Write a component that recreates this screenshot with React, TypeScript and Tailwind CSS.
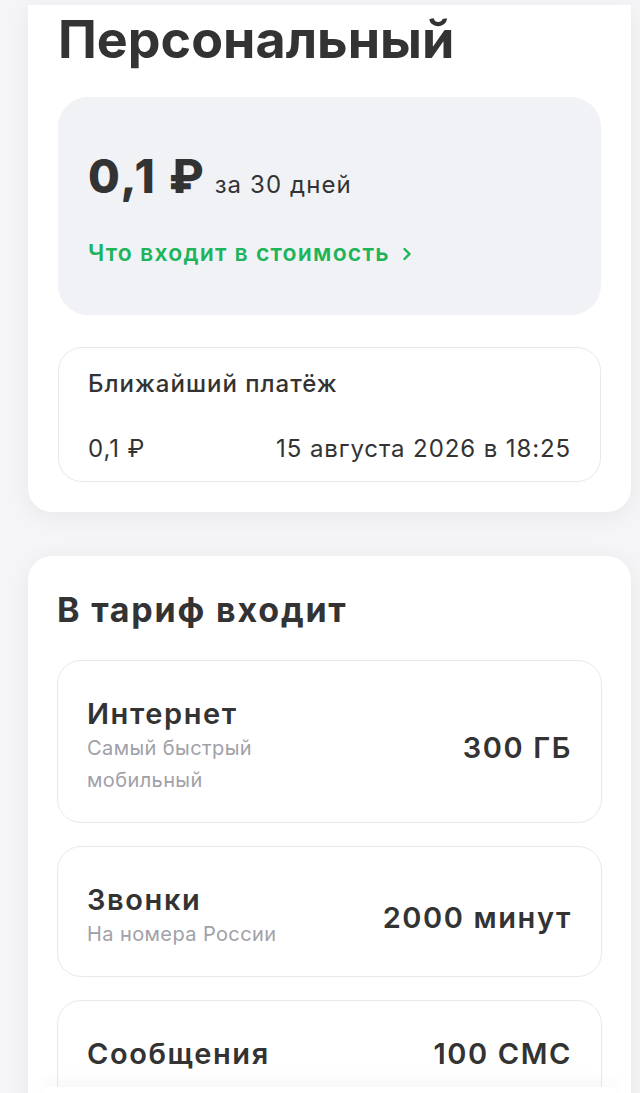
import React from "react";

function Chevron() {
  return (
    <svg width="10" height="14" viewBox="0 0 10 14" fill="none" className="ml-[12px]">
      <path d="M2.5 2 L7.5 7 L2.5 12" stroke="#1db45a" strokeWidth="2.4" strokeLinecap="round" strokeLinejoin="round" />
    </svg>
  );
}

function Item({ title, sub, value, pad = "pt-[38px] pb-[26px]" }: { title: string; sub?: string[]; value: string; pad?: string }) {
  return (
    <div className={`flex items-center justify-between rounded-[24px] border border-[#e9e9ec] bg-white pl-[29px] pr-[29px] ${pad}`}>
      <div className="flex flex-col">
        <div className="text-[29px] leading-[29px] font-semibold tracking-[1.6px] text-[#333333]">{title}</div>
        {sub && (
          <div className="mt-[4px] text-[20px] leading-[32px] tracking-[0.4px] text-[#a0a1a8]">
            {sub.map((s) => (
              <div key={s}>{s}</div>
            ))}
          </div>
        )}
      </div>
      <div className="text-[29px] leading-[29px] font-semibold tracking-[1.6px] text-[#333333] whitespace-nowrap">{value}</div>
    </div>
  );
}

export default function App() {
  return (
    <div
      className="relative h-[1093px] overflow-hidden bg-[#f5f5f7] pl-[28px] pr-[9px] pt-[5px]"
      style={{ fontFamily: "Inter, 'Noto Sans', sans-serif" }}
    >
      <div className="rounded-b-[24px] bg-white px-[30px] pt-[9px] pb-[30px] shadow-[0_4px_24px_rgba(0,0,0,0.06)]">
        <h1 className="text-[52px] leading-[52px] font-bold tracking-[0px] text-[#333333]">Персональный</h1>
        <div className="mt-[31px] rounded-[30px] bg-[#f1f2f6] pl-[30px] pt-[56px] pb-[50px]">
          <div className="flex items-baseline gap-[9px]">
            <span className="text-[46px] leading-[46px] font-extrabold tracking-[2px] text-[#333333]">0,1 ₽</span>
            <span className="text-[24px] leading-[24px] tracking-[1.1px] text-[#333333]">за 30 дней</span>
          </div>
          <div className="mt-[43px] flex items-center text-[23px] leading-[23px] font-semibold tracking-[1.2px] text-[#1db45a]">
            Что входит в стоимость
            <Chevron />
          </div>
        </div>
        <div className="mt-[32px] rounded-[24px] border border-[#e9e9ec] bg-white pl-[29px] pr-[29px] pt-[24px] pb-[20px]">
          <div className="text-[24px] leading-[24px] font-medium tracking-[1px] text-[#333333]">Ближайший платёж</div>
          <div className="mt-[41px] flex items-baseline justify-between text-[24px] leading-[24px] tracking-[0.9px] text-[#333333]">
            <span>0,1 ₽</span>
            <span>15 августа 2026 в 18:25</span>
          </div>
        </div>
      </div>

      <div className="mt-[44px] rounded-[24px] bg-white px-[29px] pt-[37px] pb-[40px] shadow-[0_4px_24px_rgba(0,0,0,0.06)]">
        <h2 className="text-[34px] leading-[34px] font-bold tracking-[1.8px] text-[#333333]">В тариф входит</h2>
        <div className="mt-[33px] flex flex-col gap-[23px]">
          <Item title="Интернет" sub={["Самый быстрый", "мобильный"]} value="300 ГБ" />
          <Item title="Звонки" sub={["На номера России"]} value="2000 минут" />
          <Item title="Сообщения" value="100 СМС" pad="py-[38px]" />
        </div>
      </div>

      <div className="fixed bottom-0 left-[43px] right-[24px] h-[6px] rounded-t-[24px] bg-white shadow-[0_-4px_16px_rgba(0,0,0,0.08)]" />
    </div>
  );
}
